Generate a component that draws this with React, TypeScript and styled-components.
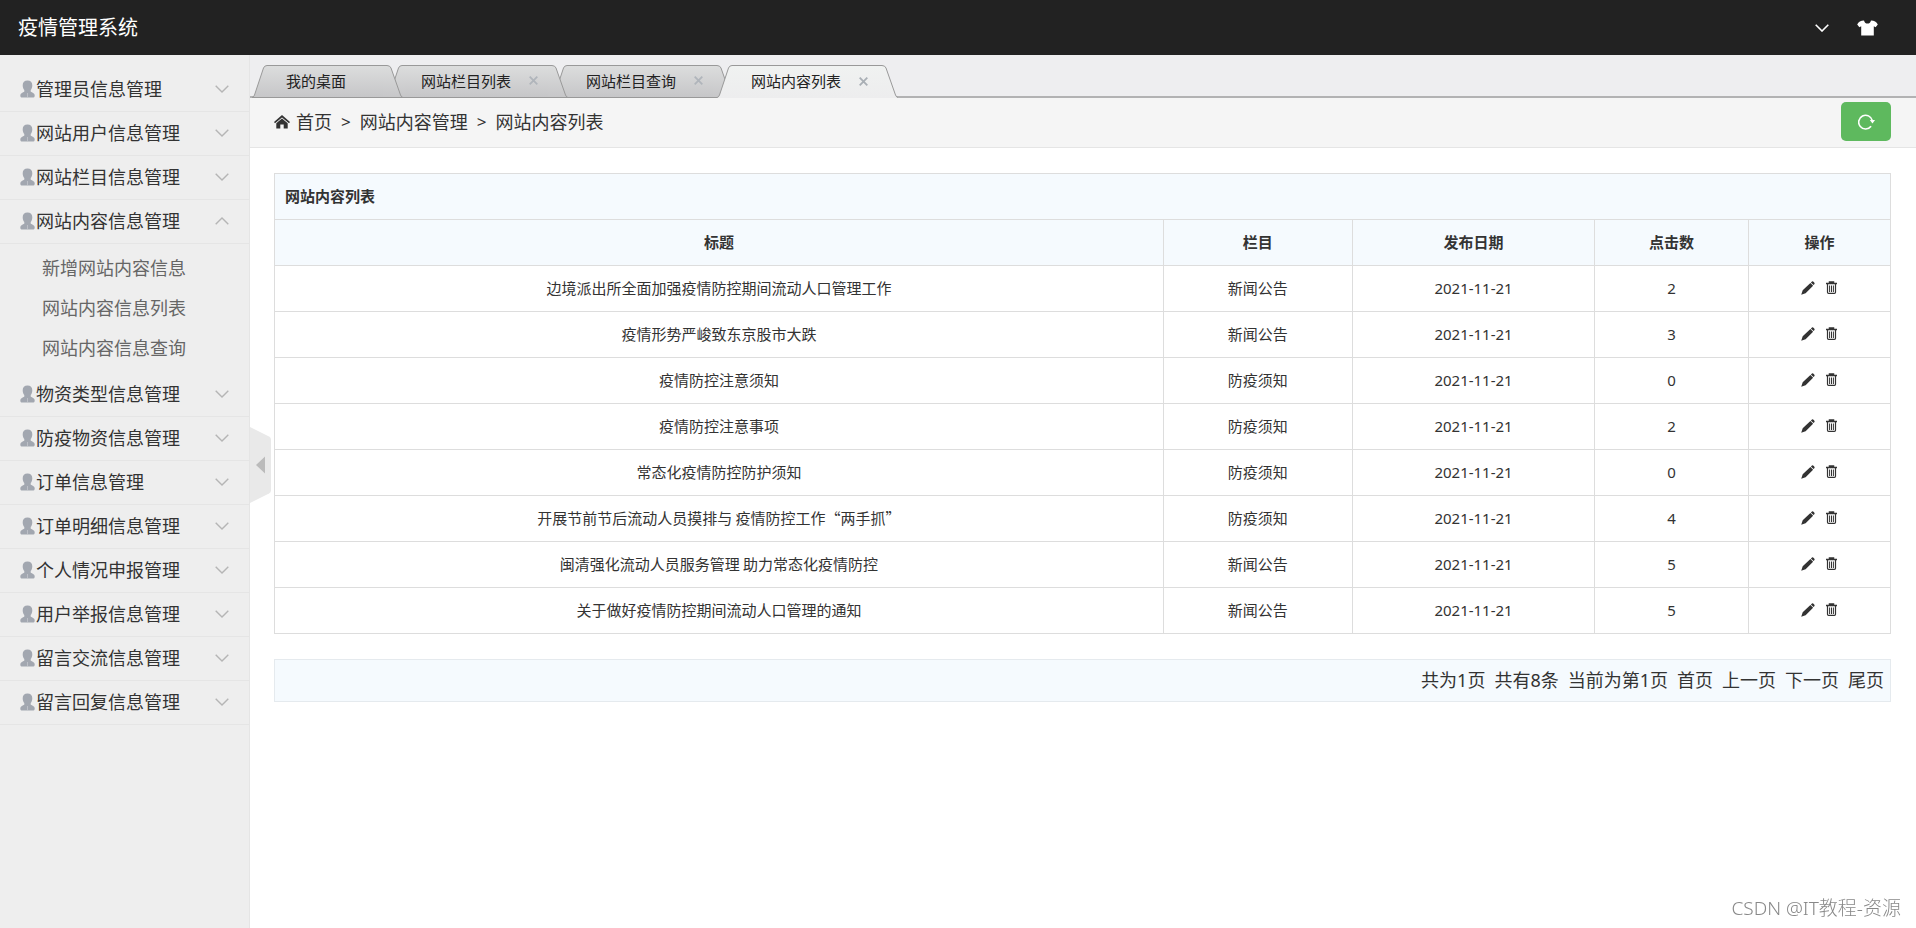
import React from "react";
import styled, { createGlobalStyle } from "styled-components";

const GlobalStyle = createGlobalStyle`
  *, *::before, *::after { box-sizing: border-box; }
  body {
    margin: 0;
    background: #fff;
    color: #333;
    font-family: "Noto Sans", "Noto Sans CJK SC", sans-serif;
    font-size: 15px;
    line-height: 22px;
  }
  a { color: inherit; text-decoration: none; }
  button { font: inherit; color: inherit; border: 0; padding: 0; background: none; cursor: pointer; }
  svg { display: block; flex: none; }
`;

const Page = styled.div`
  display: flex;
  flex-direction: column;
  min-height: 100vh;
`;

const Header = styled.header`
  display: flex;
  align-items: center;
  justify-content: space-between;
  height: 55px;
  padding: 0 38px 0 18px;
  background: #222;
  color: #fff;
`;

const Brand = styled.h1`
  margin: 0;
  font-size: 20px;
  font-weight: 400;
  line-height: 28px;
`;

const HeaderTools = styled.div`
  display: flex;
  align-items: center;
  gap: 28px;
`;

const Body = styled.div`
  display: flex;
  flex: 1;
`;

const Sidebar = styled.nav`
  flex: 0 0 250px;
  padding-top: 13px;
  background: #eee;
  border-right: 1px solid #e5e5e5;
`;

const MenuButton = styled.button`
  display: flex;
  align-items: center;
  gap: 1px;
  width: 100%;
  height: 44px;
  padding: 0 20px 2px;
  border-bottom: 1px solid #e5e5e5;
  font-size: 18px;
  text-align: left;
`;

const MenuLabel = styled.span`
  flex: 1;
  white-space: nowrap;
`;

const SubMenu = styled.ul`
  margin: 0;
  padding: 4px 0 5px;
  list-style: none;
`;

const SubLink = styled.a`
  display: block;
  padding-left: 42px;
  color: #666;
  font-size: 18px;
  line-height: 40px;
`;

const Main = styled.main`
  position: relative;
  flex: 1;
  min-width: 0;
`;

const TabBar = styled.div`
  display: flex;
  height: 43px;
  padding: 10px 0 0 2px;
  background: #eeeef0;
  border-bottom: 2px solid #b2b2b3;
`;

const Tab = styled.div<{ $active?: boolean; $order: number }>`
  position: relative;
  z-index: ${(p) => (p.$active ? 10 : p.$order)};
  display: flex;
  height: 33px;
  & + & { margin-left: -16px; }
`;

const TabBody = styled.div<{ $active?: boolean }>`
  display: flex;
  align-items: center;
  padding: 0 37px 2px 16px;
  border-top: 1px solid #999;
  border-bottom: ${(p) => (p.$active ? "0" : "1px solid #999")};
  background: ${(p) => (p.$active ? "linear-gradient(#f0f2f1, #ededee)" : "linear-gradient(#dcdddd, #c6c6c8)")};
  color: #222;
  white-space: nowrap;
`;

const TabClose = styled.button`
  display: flex;
  margin: 0 -27px 0 18px;
`;

const Crumbs = styled.div`
  display: flex;
  align-items: center;
  justify-content: space-between;
  height: 50px;
  padding: 0 25px 2px 24px;
  background: #f5f5f5;
  border-bottom: 1px solid #e5e5e5;
`;

const CrumbTrail = styled.div`
  display: flex;
  align-items: center;
  gap: 6px;
  font-size: 18px;
`;

const Separator = styled.span`
  padding: 0 3px;
  font-size: 17px;
`;

const Refresh = styled.button`
  display: flex;
  align-items: center;
  justify-content: center;
  width: 50px;
  height: 39px;
  border-radius: 5px;
  background: #5eb95e;
`;

const Content = styled.section`
  padding: 25px 25px 25px 24px;
`;

const Table = styled.table`
  width: 100%;
  table-layout: fixed;
  border-collapse: collapse;
  th, td {
    height: 46px;
    padding: 0 10px 2px;
    border: 1px solid #ddd;
    text-align: center;
  }
  th {
    background: #f5fafe;
    font-weight: 700;
  }
  td:first-child {
    font-family: "Noto Sans CJK SC", sans-serif;
  }
`;

const Col = styled.col<{ $share?: string }>`
  width: ${(p) => p.$share ?? "auto"};
`;

const TitleCell = styled.th`
  && { text-align: left; }
`;

const Actions = styled.div`
  display: flex;
  align-items: center;
  justify-content: center;
  gap: 11px;
`;

const IconButton = styled.button`
  display: flex;
`;

const Pager = styled.div`
  display: flex;
  align-items: center;
  justify-content: flex-end;
  gap: 9px;
  height: 43px;
  margin-top: 25px;
  padding: 0 6px 2px;
  background: #f5fafe;
  border: 1px solid #e5eaee;
  font-size: 18px;
`;

const Collapse = styled.button`
  position: absolute;
  left: 0;
  top: calc(50vh - 92px);
`;

const Watermark = styled.div`
  position: fixed;
  right: 15px;
  bottom: 7px;
  color: #888;
  font-size: 19px;
  font-weight: 300;
  line-height: 26px;
`;

const PersonIcon = () => (
  <svg width="15" height="18" viewBox="0 0 15 18" fill="#a2a7b0" aria-hidden="true">
    <path d="M7.500.5C10.600.5 12.300 2.400 12.300 5.200c0 2.200-.7 3.800-1.600 4.900v1.500c0 .7 4 1.200 4 4.100 0 1.300-.8 1.800-2 1.800H2.300c-1.200 0-2-.5-2-1.800 0-2.900 4-3.400 4-4.100v-1.500C3.400 9 2.700 7.400 2.700 5.200 2.700 2.400 4.400.5 7.500.5z" />
    <path d="M7 13.500h1v1H7zM7 15.500h1v1H7z" fill="#d8dade" />
  </svg>
);

const ChevronIcon = ({ up, color = "#b5b5b5", weight = 1 }: { up?: boolean; color?: string; weight?: number }) => (
  <svg width="14" height="8" viewBox="0 0 14 8" fill="none" stroke={color} strokeWidth={weight + 0.4} aria-hidden="true">
    <path d={up ? "M.7 7.300 7 1l6.300 6.300" : "M.7.7 7 7 13.300.7"} />
  </svg>
);

const ShirtIcon = () => (
  <svg width="21" height="16" viewBox="0 0 21 16" fill="#fff" aria-hidden="true">
    <path d="M7 .5C7.600 2.800 9 3.600 10.500 3.600S13.400 2.800 14 .5c3.200.2 5.600 1.300 6.800 4.100L18.600 7.300l-1.800-1V15.500H4.200V6.300l-1.800 1L.2 4.600C1.400 1.800 3.800.7 7 .5z" />
  </svg>
);

const HomeIcon = () => (
  <svg width="16" height="14" viewBox="0 0 16 14" fill="#333" aria-hidden="true">
    <path d="M8 0l8 7-1 1.300L8 2.400 1 8.300 0 7z" />
    <path d="M8 3.600l5.700 4.700V13.500H9.700V9.500H6.300v4H2.300V8.300z" />
  </svg>
);

const RefreshIcon = () => (
  <svg width="17" height="16" viewBox="0 0 17 16" aria-hidden="true">
    <path d="M13.100 12.300A6.900 6.900 0 1 1 14.300 6.500" fill="none" stroke="#fff" strokeWidth="1.600" />
    <path d="M11.800 6h5.200l-2.500 3.600z" fill="#fff" />
  </svg>
);

const PencilIcon = () => (
  <svg width="14" height="14" viewBox="0 0 14 14" fill="#333" aria-hidden="true">
    <path d="M11 .4c.8-.6 3.200 1.500 2.500 2.500L12.500 4.100 9.900 1.500zM9.400 2l2.700 2.700-7.500 7.500L.2 13.800 1.700 9.300z" />
  </svg>
);

const TrashIcon = () => (
  <svg width="11" height="13" viewBox="0 0 11 13" fill="none" stroke="#333" aria-hidden="true">
    <path d="M0 2.500h11M3.500 2.200V.9h4v1.300" strokeWidth="1.500" />
    <path d="M1.500 3v8.200q0 1.200 1.100 1.200h5.800q1.100 0 1.100-1.200V3" strokeWidth="1.200" />
    <path d="M3.600 4.500v6.500M5.500 4.500v6.500M7.400 4.500v6.500" />
  </svg>
);

const CloseIcon = ({ active }: { active?: boolean }) => (
  <svg width="9" height="9" viewBox="0 0 9 9" stroke={active ? "#a9afb5" : "#b0b5bb"} strokeWidth="1.800" aria-hidden="true">
    <path d="M.7.7l7.600 7.600M8.300.7L.7 8.300" />
  </svg>
);

const TabEdge = ({ side, active }: { side: "left" | "right"; active?: boolean }) => {
  const id = `edge-${side}-${active ? "on" : "off"}`;
  const left = side === "left";
  const width = left ? 18 : 20;
  const outline = left
    ? "M18 .5H15Q12.500.5 11.500 3L2.500 30Q1.500 32.500 0 32.500"
    : "M0 .5H4Q7 .5 8 3L17.500 30Q18.500 32.500 20 32.500";
  return (
    <svg width={width} height="33" viewBox={`0 0 ${width} 33`} aria-hidden="true">
      <defs>
        <linearGradient id={id} x1="0" y1="0" x2="0" y2="1">
          <stop offset="0" stopColor={active ? "#f0f2f1" : "#dcdddd"} />
          <stop offset="1" stopColor={active ? "#ededee" : "#c6c6c8"} />
        </linearGradient>
      </defs>
      <path d={`${outline}V33H${left ? 18 : 0}Z`} fill={`url(#${id})`} />
      <path d={outline} fill="none" stroke="#999" />
      {!active && <path d={`M0 32.500h${width}`} stroke="#999" />}
    </svg>
  );
};

const menu: { label: string; children?: string[] }[] = [
  { label: "管理员信息管理" },
  { label: "网站用户信息管理" },
  { label: "网站栏目信息管理" },
  { label: "网站内容信息管理", children: ["新增网站内容信息", "网站内容信息列表", "网站内容信息查询"] },
  { label: "物资类型信息管理" },
  { label: "防疫物资信息管理" },
  { label: "订单信息管理" },
  { label: "订单明细信息管理" },
  { label: "个人情况申报管理" },
  { label: "用户举报信息管理" },
  { label: "留言交流信息管理" },
  { label: "留言回复信息管理" },
];

const tabs = [
  { label: "我的桌面", closable: false },
  { label: "网站栏目列表", closable: true },
  { label: "网站栏目查询", closable: true },
  { label: "网站内容列表", closable: true, active: true },
];

const rows = [
  ["边境派出所全面加强疫情防控期间流动人口管理工作", "新闻公告", "2021-11-21", "2"],
  ["疫情形势严峻致东京股市大跌", "新闻公告", "2021-11-21", "3"],
  ["疫情防控注意须知", "防疫须知", "2021-11-21", "0"],
  ["疫情防控注意事项", "防疫须知", "2021-11-21", "2"],
  ["常态化疫情防控防护须知", "防疫须知", "2021-11-21", "0"],
  ["开展节前节后流动人员摸排与 疫情防控工作“两手抓”", "防疫须知", "2021-11-21", "4"],
  ["闽清强化流动人员服务管理 助力常态化疫情防控", "新闻公告", "2021-11-21", "5"],
  ["关于做好疫情防控期间流动人口管理的通知", "新闻公告", "2021-11-21", "5"],
];

export default function App() {
  return (
    <Page lang="zh-CN">
      <GlobalStyle />
      <Header>
        <Brand>疫情管理系统</Brand>
        <HeaderTools>
          <IconButton aria-label="展开"><ChevronIcon color="#fff" weight={1.2} /></IconButton>
          <IconButton aria-label="换肤"><ShirtIcon /></IconButton>
        </HeaderTools>
      </Header>
      <Body>
        <Sidebar>
          {menu.map((item) => (
            <React.Fragment key={item.label}>
              <MenuButton aria-expanded={!!item.children}>
                <PersonIcon />
                <MenuLabel>{item.label}</MenuLabel>
                <ChevronIcon up={!!item.children} />
              </MenuButton>
              {item.children && (
                <SubMenu>
                  {item.children.map((child) => (
                    <li key={child}><SubLink href="#">{child}</SubLink></li>
                  ))}
                </SubMenu>
              )}
            </React.Fragment>
          ))}
        </Sidebar>
        <Main>
          <TabBar>
            {tabs.map((tab, i) => (
              <Tab key={tab.label} $active={tab.active} $order={tabs.length - i}>
                <TabEdge side="left" active={tab.active} />
                <TabBody $active={tab.active}>
                  {tab.label}
                  {tab.closable && <TabClose aria-label="关闭"><CloseIcon active={tab.active} /></TabClose>}
                </TabBody>
                <TabEdge side="right" active={tab.active} />
              </Tab>
            ))}
          </TabBar>
          <Crumbs>
            <CrumbTrail>
              <HomeIcon />
              <a href="#">首页</a>
              <Separator>&gt;</Separator>
              <span>网站内容管理</span>
              <Separator>&gt;</Separator>
              <span>网站内容列表</span>
            </CrumbTrail>
            <Refresh aria-label="刷新"><RefreshIcon /></Refresh>
          </Crumbs>
          <Content>
            <Table>
              <colgroup>
                <Col $share="55%" />
                <Col $share="11.7%" />
                <Col $share="15%" />
                <Col $share="9.5%" />
                <Col />
              </colgroup>
              <thead>
                <tr><TitleCell colSpan={5}>网站内容列表</TitleCell></tr>
                <tr>
                  {["标题", "栏目", "发布日期", "点击数", "操作"].map((h) => <th key={h} scope="col">{h}</th>)}
                </tr>
              </thead>
              <tbody>
                {rows.map((row) => (
                  <tr key={row[0]}>
                    {row.map((cell, i) => <td key={i}>{cell}</td>)}
                    <td>
                      <Actions>
                        <IconButton aria-label="编辑"><PencilIcon /></IconButton>
                        <IconButton aria-label="删除"><TrashIcon /></IconButton>
                      </Actions>
                    </td>
                  </tr>
                ))}
              </tbody>
            </Table>
            <Pager>
              <span>共为1页</span>
              <span>共有8条</span>
              <span>当前为第1页</span>
              <a href="#">首页</a>
              <a href="#">上一页</a>
              <a href="#">下一页</a>
              <a href="#">尾页</a>
            </Pager>
          </Content>
          <Collapse aria-label="收起菜单">
            <svg width="21" height="76" viewBox="0 0 21 76" aria-hidden="true">
              <path d="M0 0L19 9.500Q21 10.500 21 12.500V63.500Q21 65.500 19 66.500L0 76z" fill="#e9e9e9" />
              <path d="M15 29.500v17L6 38z" fill="#bbb" />
            </svg>
          </Collapse>
        </Main>
      </Body>
      <Watermark>CSDN @IT教程-资源</Watermark>
    </Page>
  );
}
